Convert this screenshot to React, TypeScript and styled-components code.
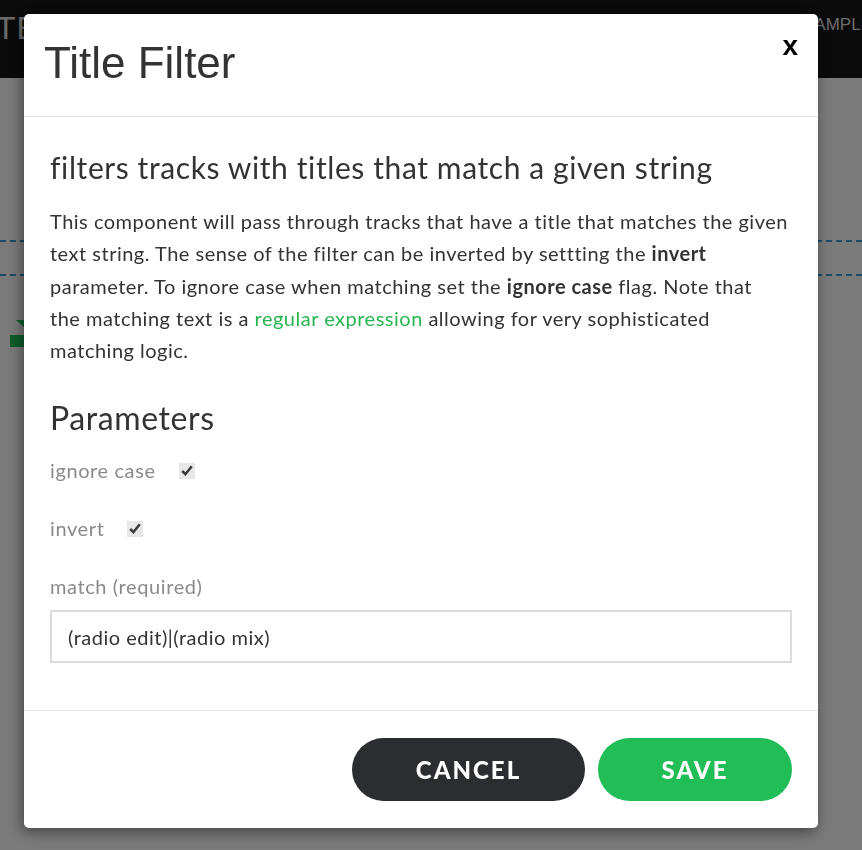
import React from 'react';
import styled, { createGlobalStyle } from 'styled-components';

const GlobalStyle = createGlobalStyle`
  html, body {
    margin: 0;
    padding: 0;
    background: #f4f4f4;
    font-family: Lato, 'Open Sans', sans-serif;
  }
`;

const Page = styled.div`
  height: 850px;
  overflow: hidden;
  background: #f4f4f4;
`;

const TopBar = styled.div`
  height: 78px;
  background: #161616;
  display: flex;
  justify-content: space-between;
  align-items: flex-start;
  color: #d6d6d6;
  font-family: 'Liberation Sans', Arial, sans-serif;
`;

const Brand = styled.div`
  font-size: 32px;
  letter-spacing: 1px;
  padding-top: 10px;
  margin-left: -4px;
`;

const NavLink = styled.div`
  font-size: 17px;
  padding-top: 15px;
  margin-right: -10px;
`;

const TrackRow = styled.div`
  margin-top: 162px;
  height: 32px;
  border-top: 2px dashed #3a94cc;
  border-bottom: 2px dashed #3a94cc;
`;

const Marker = styled.div`
  margin: 44px 0 0 10px;
`;

const Overlay = styled.div`
  position: fixed;
  inset: 0;
  background: rgba(0, 0, 0, 0.5);
  padding: 14px 0 0 24px;
`;

const Modal = styled.div`
  width: 794px;
  background: #fff;
  border-radius: 5px;
  box-shadow: -2px 4px 14px rgba(0, 0, 0, 0.45);
  color: #333;
`;

const Header = styled.div`
  height: 102px;
  border-bottom: 1px solid #e5e5e5;
  display: flex;
  justify-content: space-between;
  align-items: flex-start;
  padding: 0 20px 0 20px;
`;

const Title = styled.h1`
  margin: 24px 0 0 0;
  font-family: 'Liberation Sans', Arial, sans-serif;
  font-weight: 400;
  font-size: 44px;
  color: #333;
`;

const Close = styled.button`
  border: 0;
  background: none;
  padding: 0;
  margin-top: 16px;
  font-family: 'Liberation Sans', Arial, sans-serif;
  font-weight: bold;
  font-size: 28px;
  color: #000;
  cursor: pointer;
`;

const Body = styled.div`
  padding: 28px 26px 47px 26px;
  border-bottom: 1px solid #e5e5e5;
`;

const Subtitle = styled.h2`
  margin: 0 0 16px 0;
  font-size: 30px;
  font-weight: 400;
  letter-spacing: 0.6px;
  line-height: 44px;
  color: #333;
`;

const Description = styled.p`
  margin: 0;
  font-size: 20px;
  letter-spacing: 0.5px;
  line-height: 32.3px;
  color: #333;
`;

const Link = styled.a`
  color: #27b552;
  text-decoration: none;
`;

const Heading = styled.h3`
  margin: 30px 0 15px 0;
  font-size: 32px;
  font-weight: 400;
  letter-spacing: 0.6px;
  line-height: 44px;
  color: #333;
`;

const ParamRow = styled.label`
  display: flex;
  align-items: center;
  gap: 23px;
  height: 30px;
  margin-bottom: 28px;
  font-size: 20px;
  letter-spacing: 0.6px;
  color: #8a8a8a;
`;

const Check = styled.input`
  width: 16px;
  height: 16px;
  margin: 2px 0 0 0;
  accent-color: #e8e8e8;
`;

const FieldLabel = styled.div`
  font-size: 20px;
  letter-spacing: 0.6px;
  color: #8a8a8a;
  height: 30px;
  line-height: 30px;
  margin: 1px 0 9px 0;
`;

const TextInput = styled.input`
  box-sizing: border-box;
  width: 100%;
  height: 53px;
  border: 2px solid #dcdcdc;
  padding: 0 16px;
  font-family: Lato, 'Open Sans', sans-serif;
  font-size: 20px;
  letter-spacing: 0.5px;
  color: #333;
  outline: none;
`;

const Footer = styled.div`
  display: flex;
  justify-content: flex-end;
  gap: 13px;
  padding: 27px 26px 27px 26px;
`;

const PillButton = styled.button<{ $primary?: boolean }>`
  height: 63px;
  width: ${(p) => (p.$primary ? '194px' : '233px')};
  border: 0;
  border-radius: 32px;
  background: ${(p) => (p.$primary ? '#21bd57' : '#2c2d30')};
  color: #fff;
  font-family: Lato, 'Open Sans', sans-serif;
  font-weight: 900;
  font-size: 24px;
  letter-spacing: 2px;
  cursor: pointer;
`;

export default function App() {
  return (
    <>
      <GlobalStyle />
      <Page>
        <TopBar>
          <Brand>TE</Brand>
          <NavLink>SAMPLE</NavLink>
        </TopBar>
        <TrackRow />
        <Marker>
          <svg width="16" height="28" viewBox="0 0 16 28">
            <polygon points="6,0 16,0 16,9" fill="#1fbb58" />
            <rect x="0" y="15" width="16" height="12" fill="#1fbb58" />
          </svg>
        </Marker>
      </Page>
      <Overlay>
        <Modal>
          <Header>
            <Title>Title Filter</Title>
            <Close aria-label="close">x</Close>
          </Header>
          <Body>
            <Subtitle>filters tracks with titles that match a given string</Subtitle>
            <Description>
              This component will pass through tracks that have a title that matches the given text
              string. The sense of the filter can be inverted by settting the <b>invert</b>{' '}
              parameter. To ignore case when matching set the <b>ignore case</b> flag. Note that
              the{'\u00a0'}matching text is a <Link href="#">regular expression</Link> allowing for
              very sophisticated matching logic.
            </Description>
            <Heading>Parameters</Heading>
            <ParamRow>
              ignore case
              <Check type="checkbox" defaultChecked />
            </ParamRow>
            <ParamRow>
              invert
              <Check type="checkbox" defaultChecked />
            </ParamRow>
            <FieldLabel>match (required)</FieldLabel>
            <TextInput defaultValue="(radio edit)|(radio mix)" />
          </Body>
          <Footer>
            <PillButton>CANCEL</PillButton>
            <PillButton $primary>SAVE</PillButton>
          </Footer>
        </Modal>
      </Overlay>
    </>
  );
}
